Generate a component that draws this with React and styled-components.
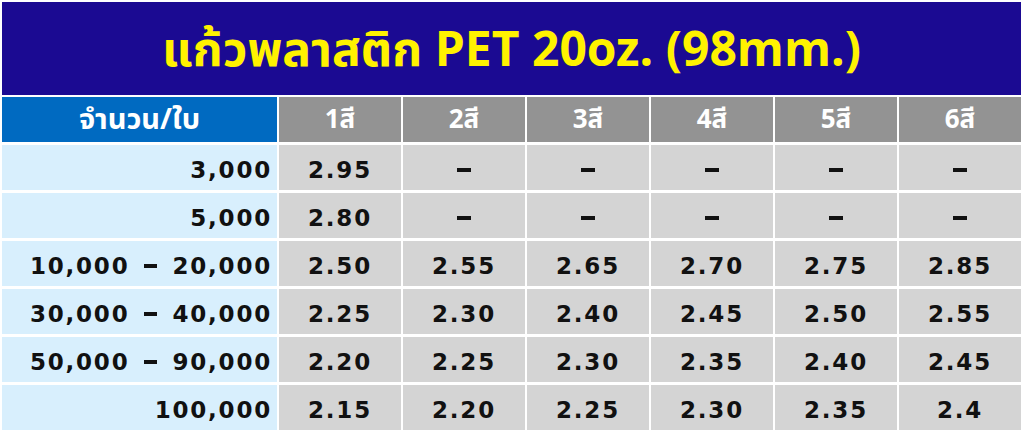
import React from "react";
import styled, { createGlobalStyle } from "styled-components";

const GlobalStyle = createGlobalStyle`
  html, body {
    margin: 0;
    padding: 0;
    background: #ffffff;
  }
  body {
    font-family: "Noto Sans Thai", "Noto Sans", "DejaVu Sans", sans-serif;
  }
`;

const Sheet = styled.div`
  width: 1024px;
  height: 431px;
  padding: 2px 0 0 2px;
  box-sizing: border-box;
  overflow: hidden;
`;

const Title = styled.div`
  width: 1019px;
  height: 93px;
  margin-bottom: 2px;
  background: #1b0a92;
  color: #fff200;
  display: flex;
  align-items: center;
  justify-content: center;
  font-size: 48px;
  font-weight: 700;
  padding-top: 6px;
  box-sizing: border-box;
`;

const Grid = styled.div`
  display: grid;
  grid-template-columns: 275px repeat(6, 122px);
  grid-auto-rows: 45px;
  column-gap: 2px;
  row-gap: 3px;
`;

const HeadCell = styled.div`
  background: ${(p) => (p.$primary ? "#006ac1" : "#939393")};
  color: #ffffff;
  display: flex;
  align-items: center;
  justify-content: center;
  font-size: ${(p) => (p.$primary ? "29px" : "26px")};
  font-weight: 700;
`;

const QtyCell = styled.div`
  background: #d8effd;
  color: #111111;
  display: flex;
  align-items: center;
  justify-content: flex-end;
  gap: 15px;
  padding: 4px 5px 0 0;
  font-family: "DejaVu Sans", sans-serif;
  font-size: 23px;
  font-weight: 700;
  letter-spacing: 1.8px;
`;

const PriceCell = styled.div`
  background: #d4d4d4;
  color: #111111;
  display: flex;
  align-items: center;
  justify-content: center;
  padding-top: 4px;
  font-family: "DejaVu Sans", sans-serif;
  font-size: 23px;
  font-weight: 700;
  letter-spacing: 1.8px;
`;

const Dash = styled.span`
  display: block;
  width: ${(p) => (p.$range ? "13px" : "14px")};
  height: 4px;
  margin-top: ${(p) => (p.$range ? "1px" : "0")};
  background: #111111;
`;

const colors = ["1สี", "2สี", "3สี", "4สี", "5สี", "6สี"];

const rows = [
  { qty: ["3,000"], prices: ["2.95", null, null, null, null, null] },
  { qty: ["5,000"], prices: ["2.80", null, null, null, null, null] },
  { qty: ["10,000", "20,000"], prices: ["2.50", "2.55", "2.65", "2.70", "2.75", "2.85"] },
  { qty: ["30,000", "40,000"], prices: ["2.25", "2.30", "2.40", "2.45", "2.50", "2.55"] },
  { qty: ["50,000", "90,000"], prices: ["2.20", "2.25", "2.30", "2.35", "2.40", "2.45"] },
  { qty: ["100,000"], prices: ["2.15", "2.20", "2.25", "2.30", "2.35", "2.4"] },
];

const App = () => {
  return (
    <>
      <GlobalStyle />
      <Sheet>
        <Title>แก้วพลาสติก PET 20oz. (98mm.)</Title>
        <Grid>
          <HeadCell $primary>จำนวน/ใบ</HeadCell>
          {colors.map((c) => (
            <HeadCell key={c}>{c}</HeadCell>
          ))}
          {rows.map((row) => (
            <React.Fragment key={row.qty.join("-")}>
              <QtyCell>
                <span>{row.qty[0]}</span>
                {row.qty[1] && (
                  <>
                    <Dash $range />
                    <span>{row.qty[1]}</span>
                  </>
                )}
              </QtyCell>
              {row.prices.map((p, i) => (
                <PriceCell key={i}>{p ? p : <Dash />}</PriceCell>
              ))}
            </React.Fragment>
          ))}
        </Grid>
      </Sheet>
    </>
  );
};

export default App;
